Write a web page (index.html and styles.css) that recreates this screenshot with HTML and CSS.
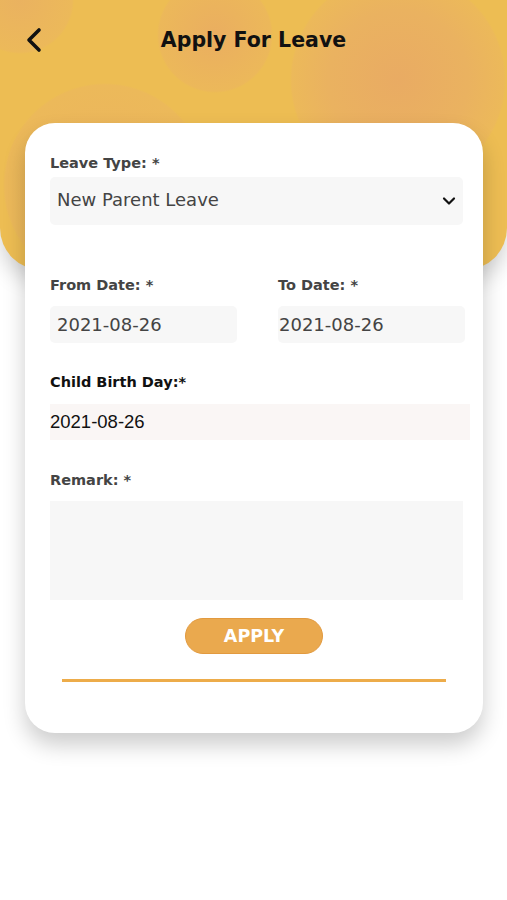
FILE: index.html
```html
<!DOCTYPE html>
<html lang="en">
<head>
  <meta charset="UTF-8">
  <title>Apply For Leave</title>
  <meta name="viewport" content="width=device-width, initial-scale=1.0">
  <link rel="stylesheet" href="styles.css">
</head>
<body>
  <div class="cabecera">
    <div class="barra">
      <button class="volver" aria-label="Back">
        <svg width="20" height="26" viewBox="0 0 20 26">
          <path d="M14 3 L4 13 L14 23" fill="none" stroke="#111" stroke-width="3.6" stroke-linecap="round" stroke-linejoin="round"/>
        </svg>
      </button>
      <h1>Apply For Leave</h1>
    </div>
  </div>

  <form class="tarjeta">
    <div class="campo">
      <label class="etiqueta">Leave Type: *</label>
      <div class="selector">
        <span>New Parent Leave</span>
        <svg width="14" height="10" viewBox="0 0 14 10">
          <path d="M2 2.5 L7 7.5 L12 2.5" fill="none" stroke="#111" stroke-width="2.2" stroke-linecap="round" stroke-linejoin="round"/>
        </svg>
      </div>
    </div>

    <div class="fechas">
      <div class="campo">
        <label class="etiqueta">From Date: *</label>
        <div class="entrada fecha">2021-08-26</div>
      </div>
      <div class="campo">
        <label class="etiqueta">To Date: *</label>
        <div class="entrada fecha fecha-fin">2021-08-26</div>
      </div>
    </div>

    <div class="campo nacimiento">
      <label class="etiqueta oscura">Child Birth Day:*</label>
      <div class="entrada dia">2021-08-26</div>
    </div>

    <div class="campo nota">
      <label class="etiqueta">Remark: *</label>
      <div class="area"></div>
    </div>

    <div class="acciones">
      <button type="button" class="aplicar">APPLY</button>
    </div>
    <div class="linea"></div>
  </form>
</body>
</html>
```

FILE: styles.css
```css
body {
  margin: 0;
  padding-bottom: 60px;
  font-family: "DejaVu Sans", Verdana, sans-serif;
  background: #fff;
}

/* fondo amarillo con circulos */
.cabecera {
  height: 270px;
  border-radius: 0 0 42px 42px;
  background:
    radial-gradient(circle at 398px 80px, #e9ab63 0, #eab260 70px, #ecb95a 106px, rgba(236, 188, 83, 0) 108px),
    radial-gradient(circle at 215px 35px, #eaae60 0, #ecb85a 56px, rgba(236, 188, 83, 0) 58px),
    radial-gradient(circle at 105px 185px, #ebb45d 0, #ecb95a 100px, rgba(236, 188, 83, 0) 102px),
    radial-gradient(circle at 20px 0px, #eab260 0, #ecb95a 52px, rgba(236, 188, 83, 0) 54px),
    #edbd53;
  box-shadow: 0 10px 22px rgba(0, 0, 0, 0.18);
}

.barra {
  display: flex;
  align-items: center;
  justify-content: center;
  position: relative;
  height: 34px;
  padding-top: 23px;
}

.volver {
  position: absolute;
  left: 25px;
  top: 27px;
  border: none;
  background: none;
  padding: 0;
  cursor: pointer;
}

h1 {
  margin: 0;
  font-size: 20.5px;
  font-weight: bold;
  color: #111;
}

.tarjeta {
  margin: -147px 0 0 25px;
  width: 458px;
  height: 610px;
  box-sizing: border-box;
  padding: 31px 0 0 25px;
  background: #fff;
  border-radius: 30px;
  box-shadow: 0 12px 22px rgba(0, 0, 0, 0.2);
  position: relative;
}

.etiqueta {
  display: block;
  font-size: 14.5px;
  font-weight: bold;
  line-height: 18px;
  color: #444;
}

.etiqueta.oscura {
  color: #111;
}

.selector {
  margin-top: 5px;
  width: 413px;
  height: 48px;
  box-sizing: border-box;
  padding: 0 7px;
  background: #f7f7f7;
  border-radius: 5px;
  display: flex;
  align-items: center;
  justify-content: space-between;
  font-size: 18px;
  color: #444;
}

.selector span {
  margin-bottom: 4px;
}

.fechas {
  display: flex;
  gap: 41px;
  margin-top: 51px;
}

.entrada {
  margin-top: 12px;
  height: 37px;
  box-sizing: border-box;
  display: flex;
  align-items: center;
  border-radius: 5px;
}

.fecha {
  width: 187px;
  padding-left: 7px;
  background: #f7f7f7;
  font-size: 18px;
  color: #444;
}

.fecha-fin {
  padding-left: 1px;
}

.nacimiento {
  margin-top: 30px;
}

.dia {
  margin-top: 13px;
  width: 420px;
  height: 36px;
  border-radius: 0;
  background: #faf6f5;
  font-family: "Liberation Sans", Arial, sans-serif;
  font-size: 18.5px;
  color: #111;
}

.nota {
  margin-top: 31px;
}

.area {
  margin-top: 12px;
  width: 413px;
  height: 99px;
  background: #f7f7f7;
}

.acciones {
  width: 408px;
  display: flex;
  justify-content: center;
  margin-top: 18px;
}

.aplicar {
  width: 138px;
  height: 36px;
  border: 1px solid #e29a3f;
  border-radius: 18px;
  background: #eaa94e;
  color: #fff;
  font-family: "DejaVu Sans", Verdana, sans-serif;
  font-size: 17.5px;
  font-weight: bold;
  padding: 0;
  cursor: pointer;
}

.linea {
  margin: 25px 0 0 12px;
  width: 384px;
  height: 3px;
  background: #edac4a;
}
```
